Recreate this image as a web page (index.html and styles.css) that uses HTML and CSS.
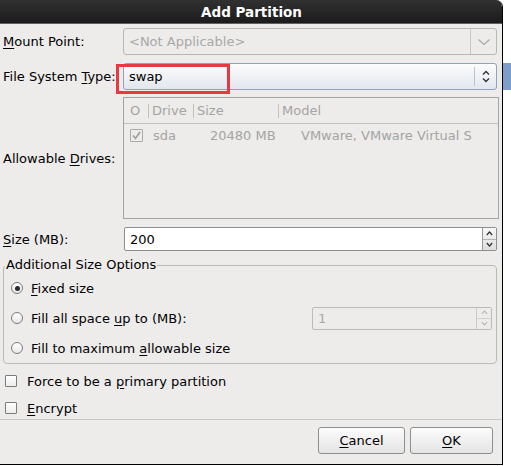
FILE: index.html
```html
<!DOCTYPE html>
<html>
<head>
<meta charset="utf-8">
<title>Add Partition</title>
<link rel="stylesheet" href="styles.css">
</head>
<body>
<div class="screen">
  <div class="window">
    <div class="titlebar">Add Partition</div>
    <div class="content">
      <div class="form">
        <div class="lbl"><u>M</u>ount Point:</div>
        <div class="combo disabled">
          <span class="combo-text">&lt;Not Applicable&gt;</span>
          <span class="combo-btn">
            <svg width="12" height="6" viewBox="0 0 12 6"><polyline points="0.5,0.5 6,5.5 11.5,0.5" fill="none" stroke="#a9a8a5" stroke-width="1.2"/></svg>
          </span>
        </div>

        <div class="lbl">File System <u>T</u>ype:</div>
        <div class="combo active">
          <span class="combo-text">swap</span>
          <span class="combo-btn sep">
            <svg width="8" height="13" viewBox="0 0 8 13"><polyline points="1,4.5 4,1.5 7,4.5" fill="none" stroke="#2e2e2e" stroke-width="1.3"/><polyline points="1,8.5 4,11.5 7,8.5" fill="none" stroke="#2e2e2e" stroke-width="1.3"/></svg>
          </span>
          <span class="highlight"></span>
        </div>

        <div class="lbl">Allowable <u>D</u>rives:</div>
        <div class="tree">
          <div class="tree-head">
            <div class="hcell first">O</div>
            <div class="hcell">Drive</div>
            <div class="hcell">Size</div>
            <div class="hcell">Model</div>
          </div>
          <div class="tree-row">
            <div class="cell c1"><span class="tcheck"><svg width="11" height="11" viewBox="0 0 11 11"><polyline points="2,5.5 4.5,8.5 9,2" fill="none" stroke="#9c9c9c" stroke-width="1.6"/></svg></span></div>
            <div class="cell c2">sda</div>
            <div class="cell c3">20480 MB</div>
            <div class="cell c4">VMware, VMware Virtual S</div>
          </div>
        </div>

        <div class="lbl"><u>S</u>ize (MB):</div>
        <div class="spin">
          <span class="spin-text">200</span>
          <span class="spin-btns">
            <span class="sb up"><svg width="7" height="5" viewBox="0 0 7 5"><polyline points="0.8,4 3.5,1 6.2,4" fill="none" stroke="#2e2e2e" stroke-width="1.2"/></svg></span>
            <span class="sb down"><svg width="7" height="5" viewBox="0 0 7 5"><polyline points="0.8,1 3.5,4 6.2,1" fill="none" stroke="#2e2e2e" stroke-width="1.2"/></svg></span>
          </span>
        </div>

        <fieldset class="frame">
          <legend>Additional Size Options</legend>
          <div class="opt">
            <span class="radio checked"></span>
            <span><u>F</u>ixed size</span>
          </div>
          <div class="opt">
            <span class="radio"></span>
            <span class="grow">Fill all space <u>u</u>p to (MB):</span>
            <span class="spin small disabled">
              <span class="spin-text">1</span>
              <span class="spin-btns">
                <span class="sb up"><svg width="7" height="5" viewBox="0 0 7 5"><polyline points="0.8,4 3.5,1 6.2,4" fill="none" stroke="#b0afac" stroke-width="1.1"/></svg></span>
                <span class="sb down"><svg width="7" height="5" viewBox="0 0 7 5"><polyline points="0.8,1 3.5,4 6.2,1" fill="none" stroke="#b0afac" stroke-width="1.1"/></svg></span>
              </span>
            </span>
          </div>
          <div class="opt">
            <span class="radio"></span>
            <span>Fill to maximum <u>a</u>llowable size</span>
          </div>
        </fieldset>
      </div>

      <div class="checks">
        <div class="chk"><span class="box"></span><span>Force to be a <u>p</u>rimary partition</span></div>
        <div class="chk"><span class="box"></span><span><u>E</u>ncrypt</span></div>
      </div>
      <div class="separator"></div>
      <div class="buttons">
        <button class="btn cancel"><u>C</u>ancel</button>
        <button class="btn ok"><u>O</u>K</button>
      </div>
    </div>
  </div>
  <div class="backdrop"><div class="blue"></div></div>
</div>
</body>
</html>
```

FILE: styles.css
```css
* { box-sizing: border-box; }
html, body { margin: 0; padding: 0; }
body {
  width: 511px;
  height: 466px;
  background: #ffffff;
  font-family: "DejaVu Sans", sans-serif;
  font-size: 13px;
  color: #000;
  overflow: hidden;
}
u { text-underline-offset: 2px; }

.screen { display: flex; align-items: flex-start; }

.window {
  width: 503px;
  height: 465px;
  background: #edeceb;
  border-right: 1px solid #000;
  border-bottom: 1px solid #000;
  border-top-right-radius: 7px;
  display: flex;
  flex-direction: column;
  overflow: hidden;
}

.titlebar {
  height: 24px;
  flex: none;
  background: linear-gradient(#313131, #1b1b1b);
  border-bottom: 1px solid #5c6169;
  color: #fff;
  font-weight: bold;
  font-size: 13.5px;
  display: flex;
  align-items: center;
  justify-content: center;
  padding-left: 1px;
}

.backdrop { flex: 1; padding-top: 63px; }
.blue { height: 27px; background: #7d9dcc; }

.content {
  flex: 1;
  display: flex;
  flex-direction: column;
  padding: 4px 5px 0 3px;
}

.form {
  display: grid;
  grid-template-columns: 120px 1fr;
  row-gap: 8px;
  align-items: center;
}

.lbl { white-space: nowrap; }

/* combo boxes */
.combo {
  position: relative;
  height: 27px;
  border-radius: 3px;
  display: flex;
  align-items: center;
}
.combo.disabled {
  border: 1px solid #b9b7b3;
  background: #edeceb;
  color: #a9a8a5;
}
.combo.active {
  border: 1px solid #8ea3c0;
  background: linear-gradient(#fcfcfd, #e2e7ee);
}
.combo-text { flex: 1; padding-left: 5px; }
.combo-btn {
  width: 26px;
  height: 100%;
  display: flex;
  align-items: center;
  justify-content: center;
  border-left: 1px solid #c9c7c3;
}
.combo-btn.sep {
  width: 22px;
  height: 19px;
  border-left: 1px solid #b9c2cf;
  padding-left: 1px;
}
.highlight {
  position: absolute;
  left: -8px;
  top: 0px;
  width: 114px;
  height: 30px;
  border: 3px solid #e8393e;
}

/* tree view */
.tree {
  height: 122px;
  margin: -1px -2px 0 0;
  border: 1px solid #a3a3a3;
  background: #edeceb;
  color: #a4a4a2;
  align-self: start;
}
.tree-head, .tree-row {
  display: grid;
  grid-template-columns: 24px 45px 85px 1fr;
}
.tree-head {
  height: 26px;
  border-bottom: 1px solid #c3c2bf;
  align-items: center;
}
.hcell {
  height: 100%;
  display: flex;
  align-items: center;
  padding-left: 4px;
  position: relative;
}
.hcell::before {
  content: "";
  position: absolute;
  left: 0;
  top: 6px;
  height: 14px;
  border-left: 1px solid #c2c1be;
}
.hcell.first { padding-left: 6px; }
.hcell.first::before { display: none; }
.tree-row { height: 22px; align-items: center; }
.cell { white-space: nowrap; overflow: hidden; }
.c1 { padding-left: 6px; display: flex; }
.c2 { padding-left: 5px; }
.c3 { padding-left: 17px; }
.c4 { padding-left: 23px; }
.tcheck {
  width: 13px;
  height: 13px;
  border: 1px solid #a9a9a7;
  border-radius: 1px;
  display: flex;
  align-items: center;
  justify-content: center;
}

/* spin buttons */
.spin {
  height: 24px;
  display: flex;
  border: 1px solid #8e8e8e;
  border-radius: 2px;
  background: #fff;
  margin-left: 1px;
}
.spin-text { flex: 1; padding-left: 5px; display: flex; align-items: center; }
.spin-btns {
  width: 14px;
  display: flex;
  flex-direction: column;
  border-left: 1px solid #9a9a9a;
  background: linear-gradient(#f7f7f7, #dedede);
}
.sb { flex: 1; display: flex; align-items: center; justify-content: center; }
.sb.up { border-bottom: 1px solid #b3b3b3; }

.spin.small {
  width: 180px;
  height: 23px;
  margin-left: 0;
  margin-right: 4px;
}
.spin.disabled {
  background: #edeceb;
  border-color: #bdbbb7;
  color: #a9a8a5;
}
.spin.disabled .spin-btns {
  width: 15px;
  background: #edeceb;
  border-left-color: #cdcbc7;
}
.spin.disabled .sb.up { border-bottom-color: #d3d1cd; }

/* frame */
.frame {
  grid-column: 1 / -1;
  margin: -2px 0 0 0;
  padding: 0 0 0 7px;
  border: 1px solid #bcbab6;
  border-radius: 4px;
  min-width: 0;
}
.frame legend {
  padding: 0 1px;
  margin-left: -6px;
  line-height: 16px;
}
.opt {
  height: 30px;
  display: flex;
  align-items: center;
}
.grow { flex: 1; }
.radio {
  width: 12px;
  height: 12px;
  border: 1px solid #7b7b7b;
  border-radius: 50%;
  background: linear-gradient(#ffffff, #e8e8e8);
  margin-right: 8px;
  display: flex;
  align-items: center;
  justify-content: center;
}
.radio.checked::after {
  content: "";
  width: 5px;
  height: 5px;
  border-radius: 50%;
  background: #2a2a2a;
}

/* checkboxes */
.checks {
  display: flex;
  flex-direction: column;
  gap: 5px;
  margin-top: 6px;
}
.chk {
  height: 22px;
  display: flex;
  align-items: center;
  padding-left: 2px;
}
.box {
  width: 12px;
  height: 12px;
  border: 1px solid #7b7b7b;
  border-radius: 1px;
  background: linear-gradient(#ffffff, #ececec);
  margin-right: 10px;
}

.separator {
  height: 1px;
  background: #cac8c4;
  margin: 0 -5px 0 -3px;
}

.buttons {
  display: flex;
  justify-content: flex-end;
  gap: 5px;
  padding: 7px 4px 0 0;
}
.btn {
  height: 27px;
  font-family: "DejaVu Sans", sans-serif;
  font-size: 13px;
  color: #000;
  border: 1px solid #8f8f8f;
  border-radius: 3px;
  background: linear-gradient(#fcfcfc, #e4e4e4);
  padding: 0;
}
.btn.cancel { width: 87px; }
.btn.ok { width: 83px; }
```
